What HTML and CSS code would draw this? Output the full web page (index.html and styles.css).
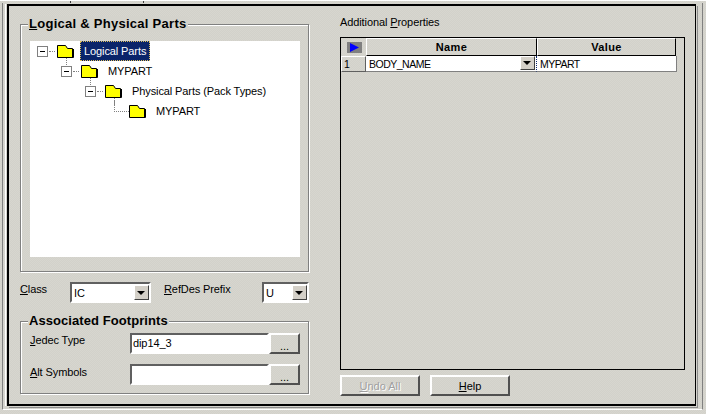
FILE: index.html

```html
<!DOCTYPE html>
<html lang="en">
<head>
  <meta charset="UTF-8" />
  <title>Logical &amp; Physical Parts</title>
  <link rel="stylesheet" href="styles.css">
</head>
<body>
  <div class="tabstrip"><span class="tab"></span><span class="tab"></span></div>
  <div class="page-outer">
    <div class="page">
      <div class="left">
        <div class="group parts">
          <div class="legend"><u>L</u>ogical &amp; Physical Parts</div>
          <div class="tree">
            <div class="node lvl0">
              <span class="box"></span><span class="dots"></span>
              <span class="folder down"><svg width="17" height="13" viewBox="0 0 17 13"><path d="M.5 12.5V.5H8.5L10.5 3.5H15.5V12.5Z" fill="#ff0" stroke="#000"/><path d="M1 12.5H16.5V4" fill="none" stroke="#000"/></svg></span>
              <span class="label selected">Logical Parts</span>
            </div>
            <div class="node lvl1">
              <span class="box"></span><span class="dots"></span>
              <span class="folder down"><svg width="17" height="13" viewBox="0 0 17 13"><path d="M.5 12.5V.5H8.5L10.5 3.5H15.5V12.5Z" fill="#ff0" stroke="#000"/><path d="M1 12.5H16.5V4" fill="none" stroke="#000"/></svg></span>
              <span class="label">MYPART</span>
            </div>
            <div class="node lvl2">
              <span class="box"></span><span class="dots"></span>
              <span class="folder down"><svg width="17" height="13" viewBox="0 0 17 13"><path d="M.5 12.5V.5H8.5L10.5 3.5H15.5V12.5Z" fill="#ff0" stroke="#000"/><path d="M1 12.5H16.5V4" fill="none" stroke="#000"/></svg></span>
              <span class="label">Physical Parts (Pack Types)</span>
            </div>
            <div class="node lvl3">
              <span class="elbow"></span>
              <span class="folder"><svg width="17" height="13" viewBox="0 0 17 13"><path d="M.5 12.5V.5H8.5L10.5 3.5H15.5V12.5Z" fill="#ff0" stroke="#000"/><path d="M1 12.5H16.5V4" fill="none" stroke="#000"/></svg></span>
              <span class="label">MYPART</span>
            </div>
          </div>
        </div>

        <div class="class-row">
          <label class="class-label"><u>C</u>lass</label>
          <div class="combo class-combo"><span>IC</span><i class="drop"></i></div>
          <label class="prefix-label"><u>R</u>efDes Prefix</label>
          <div class="combo prefix-combo"><span>U</span><i class="drop"></i></div>
        </div>

        <div class="group footprints">
          <div class="legend tight">Associated Footprints</div>
          <div class="field">
            <label><u>J</u>edec Type</label>
            <div class="input">dip14_3</div>
            <button class="more">...</button>
          </div>
          <div class="field">
            <label class="low"><u>A</u>lt Symbols</label>
            <div class="input"></div>
            <button class="more">...</button>
          </div>
        </div>
      </div>

      <div class="right">
        <div class="grid-title">Additional <u>P</u>roperties</div>
        <div class="grid">
          <div class="grid-head">
            <div class="corner"><span class="corner-btn"><svg width="9" height="9" viewBox="0 0 9 9"><path d="M0 0L9 4.5L0 9Z" fill="#00f"/></svg></span></div>
            <div class="col name">Name</div>
            <div class="col value">Value</div>
          </div>
          <div class="grid-row">
            <div class="row-no">1</div>
            <div class="cell name"><span>BODY_NAME</span><i class="drop small"></i></div>
            <div class="cell value">MYPART</div>
          </div>
        </div>
        <div class="actions">
          <button class="action disabled"><u>U</u>ndo All</button>
          <button class="action"><u>H</u>elp</button>
        </div>
      </div>
    </div>
  </div>
</body>
</html>
```

FILE: styles.css

```css
html, body {
  margin: 0;
  height: 414px;
  overflow: hidden;
}
body {
  font-family: 'Liberation Sans', Arial, sans-serif;
  font-size: 11px;
  letter-spacing: -.1px;
  color: #000;
  background: repeating-conic-gradient(#d2d1ca 0 25%, #d7d6cf 0 50%) 0 0 / 2px 2px;
}
u {
  text-underline-offset: 1px;
}

/* tab control edges */
.tabstrip {
  height: 2px;
  display: flex;
  padding-left: 14px;
  border-top: 1px solid #fff;
}
.tab {
  width: 56px;
  height: 2px;
  border-right: 1px solid #404040;
}
.tab + .tab {
  width: 72px;
}
.page-outer {
  box-sizing: border-box;
  width: 701px;
  height: 407px;
  margin-left: 2px;
  border-left: 1px solid #808080;
  border-right: 1px solid #808080;
  border-bottom: 1px solid #fff;
  padding: 1px 4px 3px 4px;
}
.page {
  box-sizing: border-box;
  height: 402px;
  width: 689px;
  border: 2px solid #000;
  border-right-width: 1px;
  box-shadow: 1px 1px 0 #d4d3cc, 2px 2px 0 #8c8c8c, -1px 0 0 #d4d3cc, -2px 0 0 #fff;
  display: flex;
  padding: 0 9px 0 11px;
  gap: 31px;
}

/* left column */
.left {
  width: 289px;
  padding-top: 18px;
}
.group {
  box-sizing: border-box;
  position: relative;
  border: 1px solid #808080;
  box-shadow: 1px 1px 0 #fff, inset 1px 1px 0 #fff;
}
.legend {
  position: absolute;
  left: 7px;
  top: -9px;
  padding: 0 1px;
  background: #d4d3cc;
  font-weight: bold;
  font-size: 13px;
  line-height: 16px;
  letter-spacing: .27px;
}
.legend.tight {
  letter-spacing: .07px;
}
.parts {
  height: 248px;
  padding: 16px 8px 0 9px;
}
.tree {
  height: 216px;
  background: #fff;
}
.node {
  height: 20px;
  display: flex;
  align-items: center;
}
.lvl0 { padding-left: 7px; }
.lvl1 { padding-left: 31px; }
.lvl2 { padding-left: 55px; }
.lvl3 { padding-left: 79px; }
.box {
  box-sizing: border-box;
  width: 11px;
  height: 11px;
  margin-top: 1px;
  border: 1px solid #808080;
  position: relative;
}
.box::after {
  content: "";
  position: absolute;
  left: 2px;
  top: 4px;
  width: 5px;
  height: 1px;
  background: #000;
}
.dots {
  width: 6px;
  margin: 0 2px 0 1px;
  border-top: 1px dotted #808080;
}
.folder {
  width: 17px;
  height: 13px;
  position: relative;
}
.folder svg {
  display: block;
}
.down::after {
  content: "";
  position: absolute;
  left: 9px;
  top: 13px;
  height: 7px;
  border-left: 1px dotted #808080;
}
.elbow {
  box-sizing: border-box;
  align-self: flex-start;
  width: 15px;
  height: 11px;
  margin-left: 5px;
  border-bottom: 1px dotted #808080;
  border-left: 1px dotted #808080;
}
.label {
  margin-left: 6px;
  padding: 3px 4px;
  line-height: 14px;
  white-space: nowrap;
}
.selected {
  background: #0a246a;
  color: #fff;
  outline: 1px dotted #e0c060;
  outline-offset: -1px;
}

/* class row */
.class-row {
  height: 49px;
  display: flex;
}
.class-row label {
  padding-top: 10px;
  line-height: 14px;
}
.class-label {
  width: 50px;
}
.prefix-label {
  margin-left: 13px;
  width: 98px;
}
.combo {
  box-sizing: border-box;
  height: 21px;
  margin-top: 10px;
  background: #fff;
  border: 2px solid;
  border-color: #606060 #fff #fff #606060;
  display: flex;
  align-items: center;
  justify-content: space-between;
  padding-left: 2px;
}
.class-combo { width: 81px; }
.prefix-combo { width: 47px; }
.drop {
  box-sizing: border-box;
  width: 15px;
  height: 15px;
  background: #d4d0c8;
  border: 1px solid;
  border-color: #fff #404040 #404040 #fff;
  position: relative;
}
.drop::after {
  content: "";
  position: absolute;
  left: 2px;
  top: 5px;
  border: 4px solid transparent;
  border-top: 4px solid #000;
  border-bottom: 0;
}

.footprints {
  height: 73px;
  padding: 11px 8px 0 9px;
}
.field {
  height: 31px;
  display: flex;
}
.field label {
  width: 100px;
  line-height: 14px;
}
.field label.low {
  padding-top: 1px;
}
.field .input {
  box-sizing: border-box;
  width: 139px;
  height: 21px;
  background: #fff;
  border: 2px solid;
  border-color: #606060 #fff #fff #606060;
  padding-left: 1px;
  line-height: 17px;
}
.more {
  box-sizing: border-box;
  width: 31px;
  height: 21px;
  margin: 0;
  padding: 4px 0 0;
  font: 11px 'Liberation Sans', Arial, sans-serif;
  background: transparent;
  border: 2px solid;
  border-color: #fff #505050 #505050 #fff;
}

/* right column */
.right {
  width: 345px;
}
.grid-title {
  height: 31px;
  padding-top: 10px;
  box-sizing: border-box;
}
.grid {
  box-sizing: border-box;
  width: 345px;
  height: 333px;
  border: 1px solid #000;
}
.grid-head, .grid-row {
  display: flex;
}
.grid-head {
  height: 18px;
}
.corner {
  box-sizing: border-box;
  width: 25px;
  display: flex;
  align-items: center;
  padding-left: 6px;
}
.corner-btn {
  width: 15px;
  height: 11px;
  background: #808080;
  display: flex;
  align-items: center;
  padding-left: 3px;
  box-sizing: border-box;
}
.col {
  box-sizing: border-box;
  text-align: center;
  font-weight: bold;
  letter-spacing: .4px;
  line-height: 17px;
  border-top: 1px solid #fff;
  border-left: 1px solid #fff;
  border-right: 1px solid #000;
  border-bottom: 1px solid #000;
}
.col.name { width: 171px; }
.col.value { width: 139px; }
.grid-row {
  height: 16px;
}
.row-no {
  box-sizing: border-box;
  width: 25px;
  padding-left: 2px;
  font-size: 10.5px;
  line-height: 15px;
  border: 1px solid;
  border-color: #fff #606060 #606060 #fff;
}
.cell {
  box-sizing: border-box;
  background: #fff;
  font-size: 10.5px;
  letter-spacing: -.5px;
  line-height: 16px;
  border-bottom: 1px solid #808080;
  padding-left: 3px;
}
.cell.name {
  width: 171px;
  display: flex;
  justify-content: space-between;
  border-right: 1px dotted #0a246a;
  padding-right: 1px;
}
.cell.value {
  width: 140px;
  border-right: 1px solid #808080;
  padding-left: 3px;
}
.drop.small {
  width: 15px;
  height: 14px;
}
.drop.small::after {
  left: 2px;
  top: 4px;
}
.actions {
  display: flex;
  gap: 10px;
  margin-top: 5px;
}
.action {
  box-sizing: border-box;
  width: 80px;
  height: 21px;
  margin: 0;
  padding: 0;
  font: 11px 'Liberation Sans', Arial, sans-serif;
  color: #000;
  background: transparent;
  border: 2px solid;
  border-color: #fff #505050 #505050 #fff;
}
.action.disabled {
  color: #a0a0a0;
  text-shadow: 1px 1px 0 #fff;
}
```
